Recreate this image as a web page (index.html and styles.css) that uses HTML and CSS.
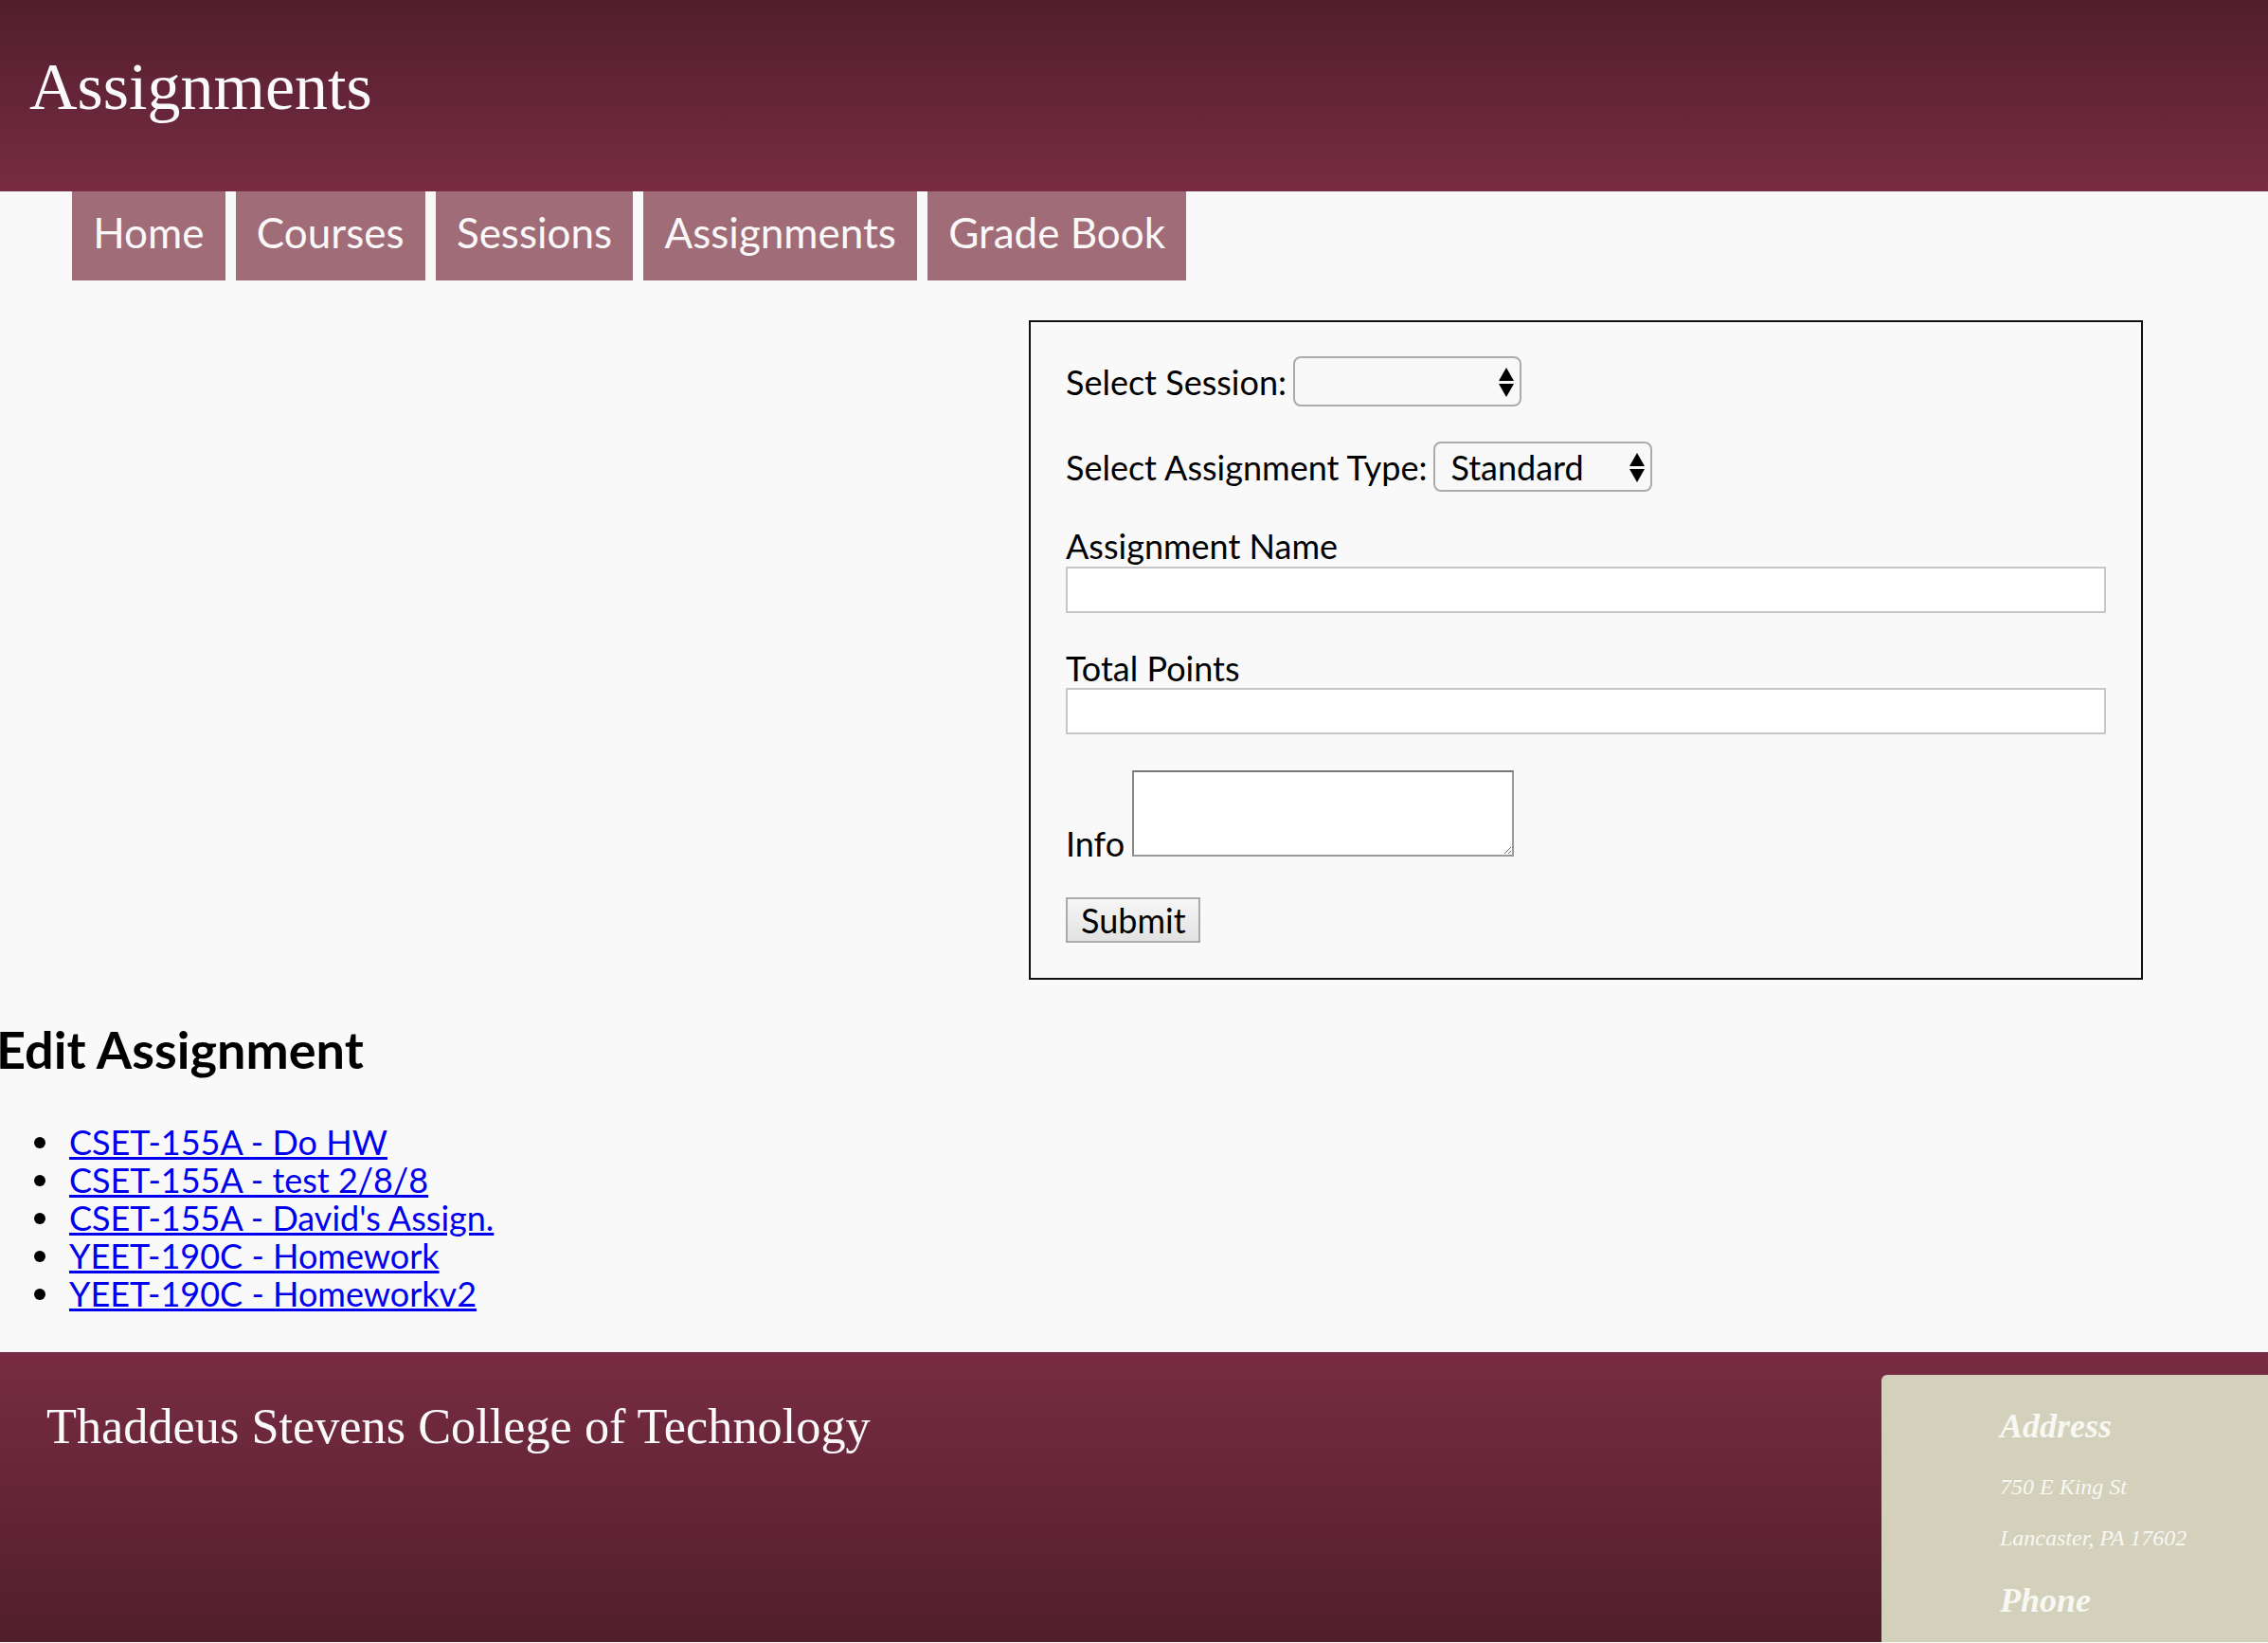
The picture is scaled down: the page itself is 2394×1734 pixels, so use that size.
FILE: index.html
```html
<!DOCTYPE html>
<html lang="en">
<head>
<meta charset="utf-8">
<title>Assignments</title>
<link rel="stylesheet" href="styles.css">
</head>
<body>
<header class="site-header">
  <h1 class="site-title">Assignments</h1>
</header>
<nav class="main-nav">
  <a class="nav-tab" href="#">Home</a>
  <a class="nav-tab" href="#">Courses</a>
  <a class="nav-tab" href="#">Sessions</a>
  <a class="nav-tab" href="#">Assignments</a>
  <a class="nav-tab" href="#">Grade Book</a>
</nav>
<main class="content">
  <div class="form-area">
    <form class="assign-form">
      <div class="row-inline row-session">
        <label class="label" for="session">Select Session:</label>
        <span class="select-wrap">
          <select class="select select-session" id="session"><option></option></select>
          <svg class="select-arrows" viewBox="0 0 16 31" width="16" height="31"><polygon points="8,0 16,14 0,14"/><polygon points="0,17 16,17 8,31"/></svg>
        </span>
      </div>
      <div class="row-inline row-type">
        <label class="label" for="type">Select Assignment Type:</label>
        <span class="select-wrap">
          <select class="select select-type" id="type"><option>Standard</option></select>
          <svg class="select-arrows" viewBox="0 0 16 31" width="16" height="31"><polygon points="8,0 16,14 0,14"/><polygon points="0,17 16,17 8,31"/></svg>
        </span>
      </div>
      <div class="row-block row-name">
        <label class="label block-label" for="aname">Assignment Name</label>
        <input class="text-input input-name" id="aname" type="text">
      </div>
      <div class="row-block row-points">
        <label class="label block-label" for="points">Total Points</label>
        <input class="text-input input-points" id="points" type="text">
      </div>
      <div class="row-info">
        <label class="label info-label" for="info">Info</label>
        <textarea class="info-area" id="info"></textarea>
      </div>
      <div class="row-submit">
        <button class="submit-btn" type="button">Submit</button>
      </div>
    </form>
  </div>
  <h2 class="edit-title">Edit Assignment</h2>
  <ul class="assign-list">
    <li class="assign-item"><a href="#">CSET-155A - Do HW</a></li>
    <li class="assign-item"><a href="#">CSET-155A - test 2/8/8</a></li>
    <li class="assign-item"><a href="#">CSET-155A - David's Assign.</a></li>
    <li class="assign-item"><a href="#">YEET-190C - Homework</a></li>
    <li class="assign-item"><a href="#">YEET-190C - Homeworkv2</a></li>
  </ul>
</main>
<footer class="site-footer">
  <div class="footer-name">Thaddeus Stevens College of Technology</div>
  <aside class="contact-card">
    <h3 class="contact-head head-address">Address</h3>
    <p class="contact-line line-street">750 E King St</p>
    <p class="contact-line line-city">Lancaster, PA 17602</p>
    <h3 class="contact-head head-phone">Phone</h3>
  </aside>
</footer>
</body>
</html>
```
FILE: styles.css
```css
html, body {
  margin: 0;
  padding: 0;
}
body {
  background: #f9f9f9;
  font-family: Lato, "Open Sans", sans-serif;
  font-size: 36px;
  color: #000;
  height: 1734px;
  overflow: hidden;
}

/* Header */
.site-header {
  height: 202px;
  box-sizing: border-box;
  padding: 52px 0 0 31px;
  background: linear-gradient(to bottom, #511e2d 0%, #782c43 100%);
}
.site-title {
  margin: 0;
  font-family: "Liberation Serif", "Times New Roman", serif;
  font-weight: normal;
  font-size: 70px;
  line-height: normal;
  color: #fbfafa;
}

/* Navigation */
.main-nav {
  display: flex;
  gap: 11px;
  padding-left: 76px;
  height: 94px;
}
.nav-tab {
  display: block;
  box-sizing: border-box;
  height: 94px;
  padding: 17px 22.2px 0 22.2px;
  background: #a06c78;
  color: #fbf8f9;
  text-decoration: none;
  font-size: 44px;
  line-height: normal;
}

/* Form */
.form-area {
  display: flex;
  justify-content: flex-end;
  padding-right: 132px;
  margin-top: 42px;
}
.assign-form {
  width: 1176px;
  box-sizing: border-box;
  border: 2px solid #111;
  padding: 36px 37px 37px 37px;
  display: flex;
  flex-direction: column;
}
.row-inline {
  display: flex;
  align-items: center;
  gap: 7px;
  height: 53px;
}
.row-session { margin-bottom: 37px; }
.row-type { margin-bottom: 37px; }
.label {
  line-height: 40px;
}
.select-wrap {
  position: relative;
  display: inline-block;
}
.select {
  -webkit-appearance: none;
  appearance: none;
  box-sizing: border-box;
  height: 53px;
  border: 2px solid #ababab;
  border-radius: 8px;
  background: #f8f8f8;
  font-family: Lato, "Open Sans", sans-serif;
  font-size: 36px;
  color: #000;
  padding: 0 40px 0 16px;
  margin: 0;
}
.select-session { width: 241px; }
.select-type { width: 231px; }
.select-arrows {
  position: absolute;
  right: 8px;
  top: 12px;
  fill: #000;
  pointer-events: none;
}
.row-block {
  display: flex;
  flex-direction: column;
  align-items: flex-start;
}
.row-name { margin-bottom: 38px; }
.row-points { margin-bottom: 38px; }
.text-input {
  box-sizing: border-box;
  width: 1098px;
  height: 49px;
  border: 2px solid #c6c6c6;
  background: #fff;
  margin: 0;
  font-family: Lato, sans-serif;
  font-size: 28px;
}
.input-name { margin-top: 2px; }
.input-points { margin-top: 1px; }
.row-info {
  display: flex;
  align-items: flex-end;
  gap: 8px;
  margin-bottom: 43px;
}
.info-label {
  margin-bottom: -6px;
}
.info-area {
  box-sizing: border-box;
  width: 403px;
  height: 91px;
  border: 2px solid #999;
  border-top-color: #777;
  border-left-color: #888;
  background: #fff;
  margin: 0;
  padding: 2px;
  font-family: Lato, sans-serif;
  font-size: 28px;
}
.row-submit {
  display: flex;
}
.submit-btn {
  box-sizing: border-box;
  width: 142px;
  height: 48px;
  border: 2px solid #ababab;
  border-radius: 0;
  background: linear-gradient(to bottom, #f6f6f6, #e2e2e2);
  font-family: Lato, sans-serif;
  font-size: 36px;
  color: #000;
  padding: 0 14px;
  line-height: 44px;
  margin: 0;
}

/* Edit list */
.edit-title {
  margin: 41px 0 0 -4px;
  font-size: 54px;
  font-weight: bold;
  line-height: normal;
}
.assign-list {
  margin: 45px 0 0 0;
  padding-left: 73px;
  height: 200px;
  line-height: 40px;
  list-style: none;
}
.assign-item {
  position: relative;
}
.assign-item::before {
  content: "";
  position: absolute;
  left: -37px;
  top: 15px;
  width: 12px;
  height: 12px;
  border-radius: 50%;
  background: #000;
}
.assign-list a {
  color: #0000ee;
}

/* Footer */
.site-footer {
  margin-top: 42px;
  height: 306px;
  overflow: hidden;
  display: flex;
  justify-content: space-between;
  align-items: flex-start;
  background: linear-gradient(to bottom, #782c43 0%, #511e2c 100%);
}
.footer-name {
  padding: 48px 0 0 49px;
  font-family: "Liberation Serif", "Times New Roman", serif;
  font-size: 52.3px;
  line-height: normal;
  color: #fbfafa;
}
.contact-card {
  margin-top: 24px;
  width: 408px;
  height: 340px;
  box-sizing: border-box;
  padding: 34px 0 0 125px;
  background: #d3d0bb;
  border-radius: 6px 0 0 0;
  font-family: "Liberation Serif", "Times New Roman", serif;
  color: #f8f8f3;
}
.contact-head {
  margin: 0;
  font-size: 36px;
  font-style: italic;
  font-weight: bold;
  line-height: 40px;
}
.head-address { margin-bottom: 29px; }
.contact-line {
  margin: 0;
  font-size: 24px;
  font-style: italic;
  line-height: 30px;
}
.line-street { margin-bottom: 24px; }
.line-city { margin-bottom: 31px; }
```
